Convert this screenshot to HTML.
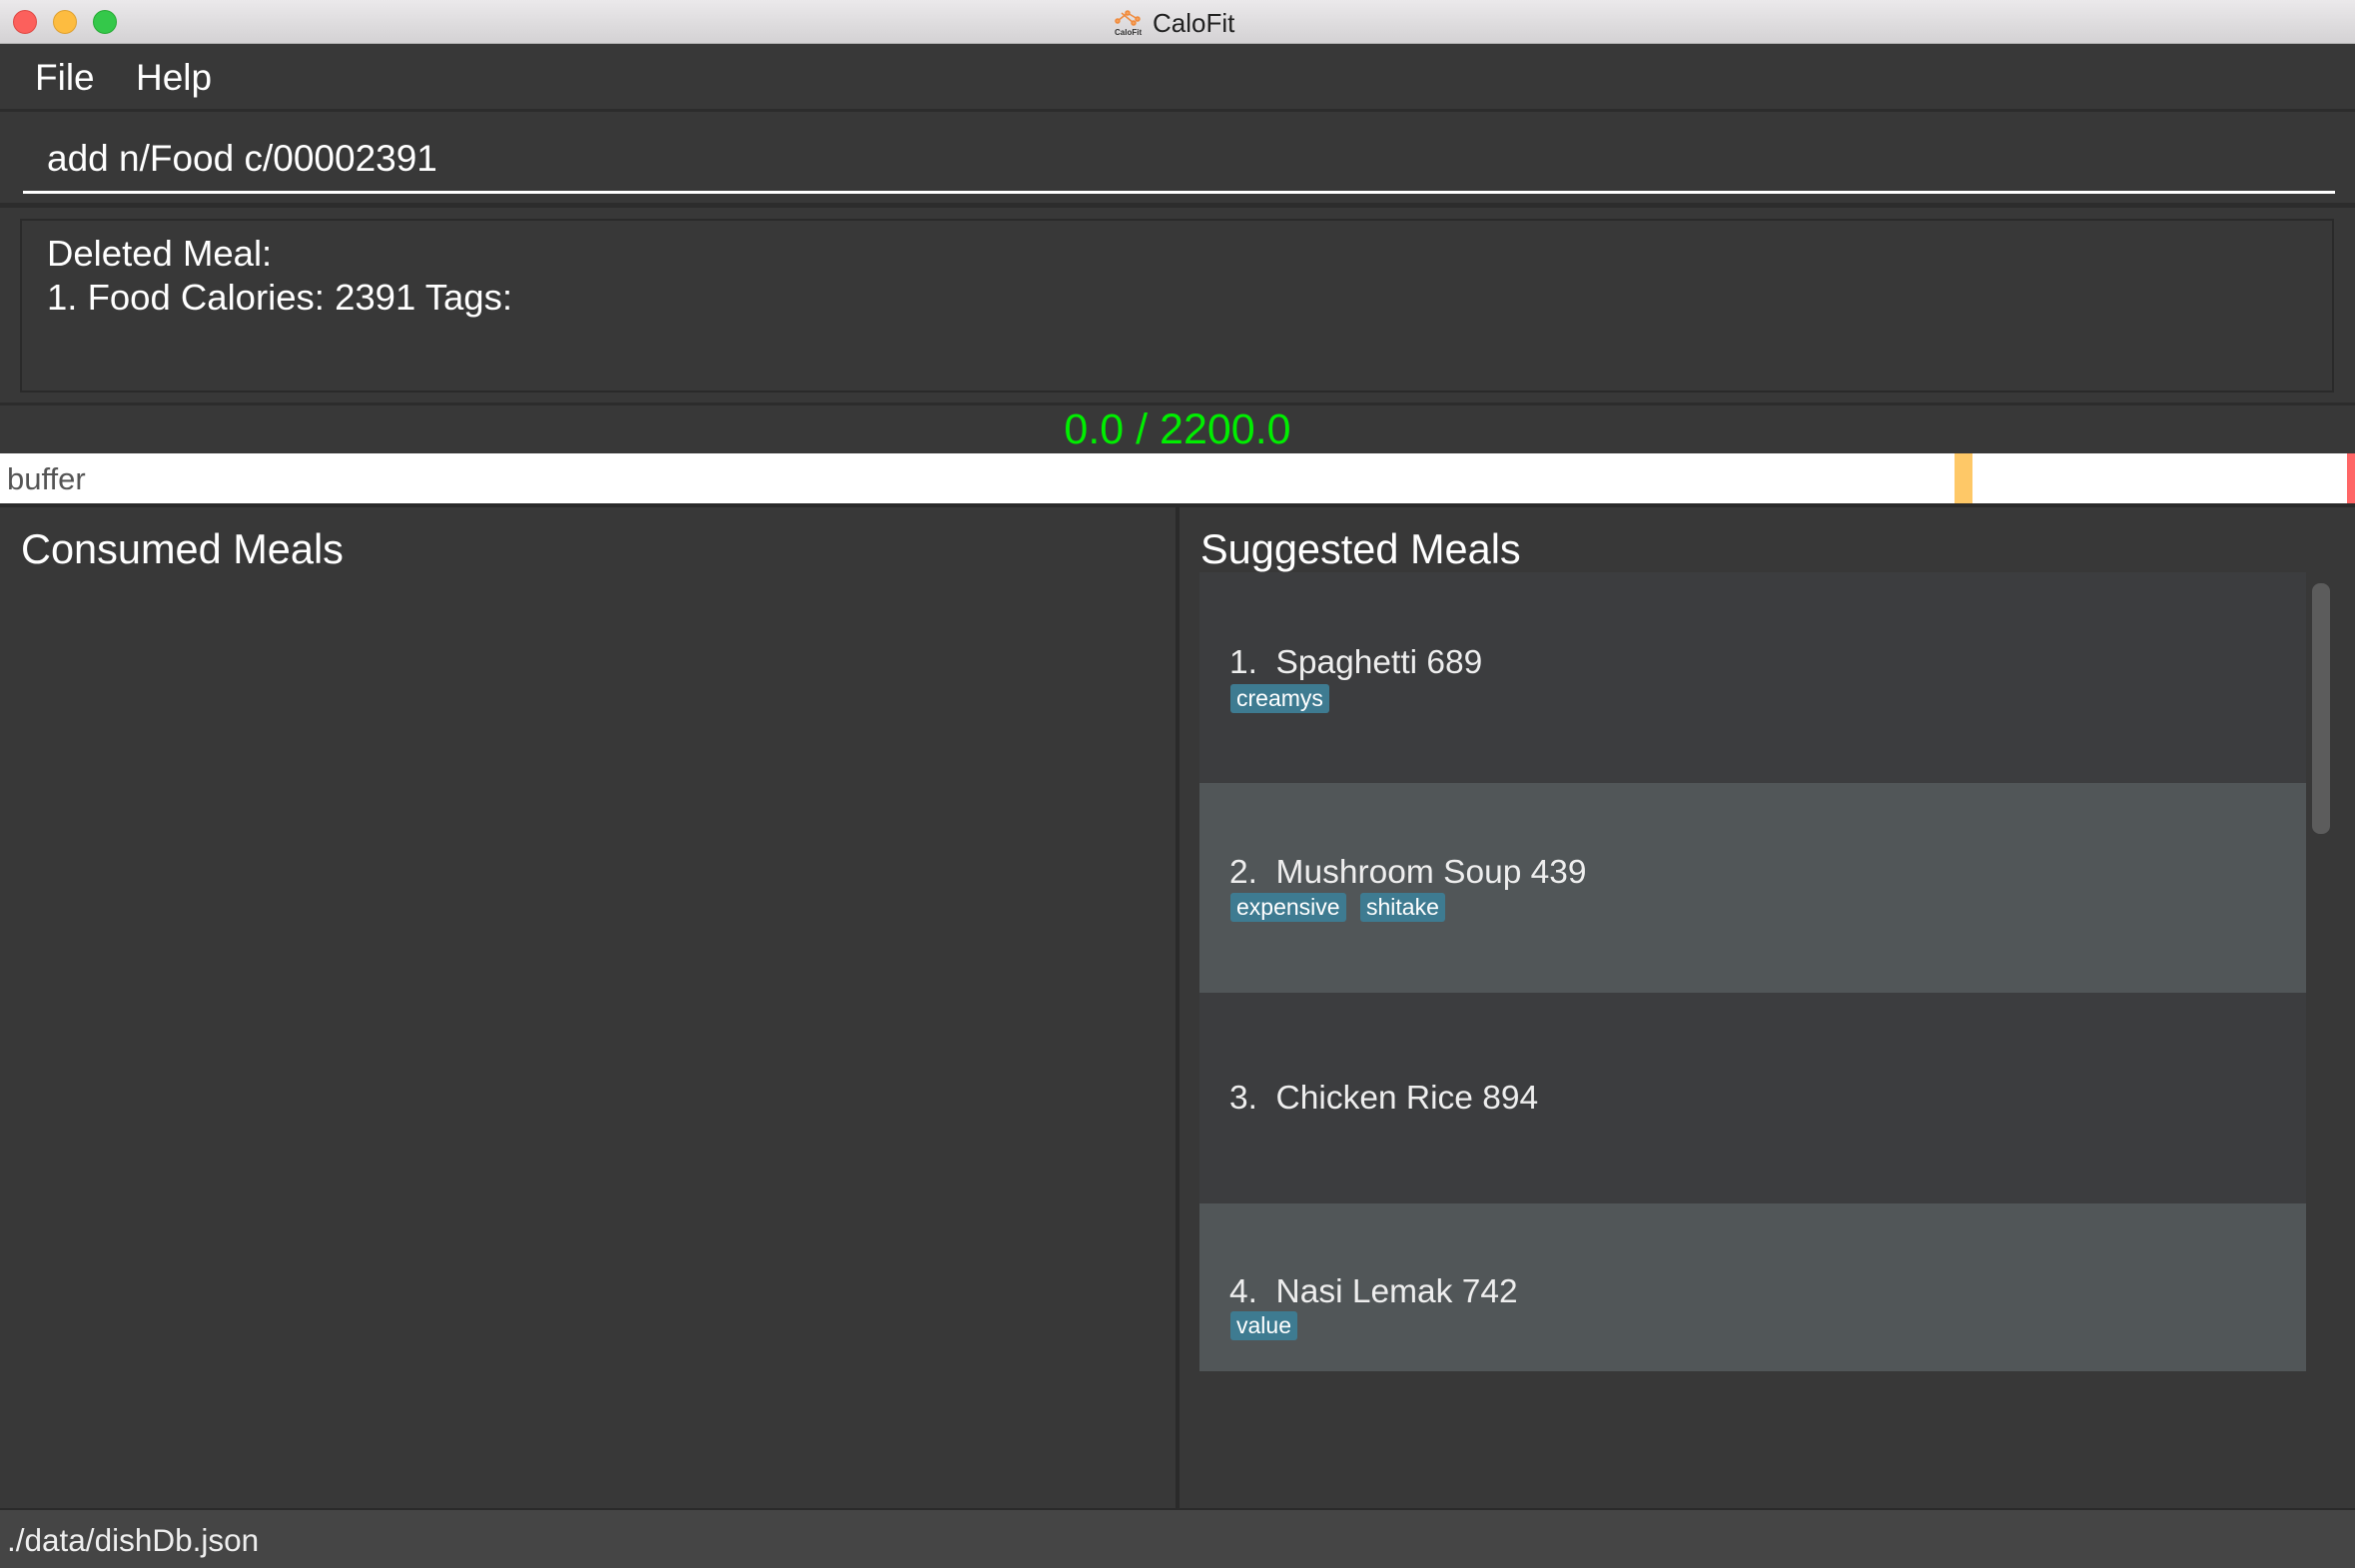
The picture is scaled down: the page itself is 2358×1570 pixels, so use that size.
<!DOCTYPE html>
<html><head><meta charset="utf-8"><style>
*{margin:0;padding:0;box-sizing:border-box}
body{width:2358px;height:1570px;background:#383838;font-family:"Liberation Sans",sans-serif;position:relative;overflow:hidden;color:#fff}
.a{position:absolute}
.t{position:absolute;white-space:nowrap;line-height:1}
.tag{position:absolute;background:#3e7b91;border-radius:3px;color:#fff;font-size:23px;height:29px;line-height:29px;padding:0 6px}
</style></head><body>
<div class="a" style="left:0;top:0;width:2358px;height:44px;background:linear-gradient(#ebe9eb,#d4d2d4);border-bottom:1px solid #b0b0b0"></div>
<div class="a" style="left:13px;top:10px;width:24px;height:24px;border-radius:50%;background:#fc605c;border:1px solid #de4a45"></div>
<div class="a" style="left:53px;top:10px;width:24px;height:24px;border-radius:50%;background:#fdbc40;border:1px solid #dea030"></div>
<div class="a" style="left:93px;top:10px;width:24px;height:24px;border-radius:50%;background:#34c84a;border:1px solid #27aa35"></div>
<svg class="a" style="left:1115px;top:9px" width="32" height="28"><g stroke="#f08a3c" stroke-width="1.5" fill="#f5a05a"><line x1="4" y1="12" x2="14" y2="4"/><line x1="14" y1="4" x2="24" y2="10"/><line x1="8" y1="4" x2="20" y2="14"/><circle cx="4" cy="12" r="2"/><circle cx="14" cy="4" r="2"/><circle cx="24" cy="10" r="2"/><circle cx="20" cy="14" r="2"/></g><text x="1" y="26" font-size="8" font-family="Liberation Sans" font-weight="bold" fill="#333">CaloFit</text></svg>
<div class="t" style="left:1154px;top:10px;font-size:26px;color:#222">CaloFit</div>
<div class="t" style="left:35px;top:59px;font-size:37px">File</div>
<div class="t" style="left:136px;top:59px;font-size:37px">Help</div>
<div class="a" style="left:0;top:109px;width:2358px;height:3px;background:#2c2c2c"></div>
<div class="t" style="left:47px;top:140px;font-size:37px">add n/Food c/00002391</div>
<div class="a" style="left:23px;top:191px;width:2315px;height:3px;background:#fff"></div>
<div class="a" style="left:0;top:203px;width:2358px;height:5px;background:#2c2c2c"></div>
<div class="a" style="left:20px;top:219px;width:2317px;height:174px;border:2px solid #2a2a2a"></div>
<div class="t" style="left:47px;top:236px;font-size:36.5px">Deleted Meal:</div>
<div class="t" style="left:47px;top:280px;font-size:36.5px">1. Food Calories: 2391 Tags:</div>
<div class="a" style="left:0;top:403px;width:2358px;height:3px;background:#2c2c2c"></div>
<div class="t" style="left:0;width:2358px;text-align:center;top:409px;font-size:43px;color:#00ee00">0.0 / 2200.0</div>
<div class="a" style="left:0;top:454px;width:2358px;height:50px;background:#fff"></div>
<div class="t" style="left:7px;top:464px;font-size:31px;color:#555">buffer</div>
<div class="a" style="left:1957px;top:454px;width:18px;height:50px;background:#fec867"></div>
<div class="a" style="left:2350px;top:454px;width:8px;height:50px;background:#f66"></div>
<div class="a" style="left:0;top:504px;width:2358px;height:4px;background:#2a2a2a"></div>
<div class="a" style="left:1177px;top:504px;width:4px;height:1006px;background:#2a2a2a"></div>
<div class="t" style="left:21px;top:529px;font-size:41.5px">Consumed Meals</div>
<div class="t" style="left:1202px;top:529px;font-size:41.5px">Suggested Meals</div>
<div class="a" style="left:1201px;top:573px;width:1108px;height:211px;background:#3c3d3f"></div>
<div class="a" style="left:1201px;top:784px;width:1108px;height:210px;background:#515658"></div>
<div class="a" style="left:1201px;top:994px;width:1108px;height:211px;background:#3c3d3f"></div>
<div class="a" style="left:1201px;top:1205px;width:1108px;height:168px;background:#515658"></div>
<div class="a" style="left:2315px;top:584px;width:18px;height:251px;border-radius:8px;background:#5c5c5c"></div>
<div class="t" style="left:1231px;top:647px;font-size:33.5px;color:#eee">1.&nbsp; Spaghetti 689</div>
<div class="tag" style="left:1232px;top:685px">creamys</div>
<div class="t" style="left:1231px;top:857px;font-size:33.5px;color:#eee">2.&nbsp; Mushroom Soup 439</div>
<div class="tag" style="left:1232px;top:894px">expensive</div>
<div class="tag" style="left:1362px;top:894px">shitake</div>
<div class="t" style="left:1231px;top:1083px;font-size:33.5px;color:#eee">3.&nbsp; Chicken Rice 894</div>
<div class="t" style="left:1231px;top:1277px;font-size:33.5px;color:#eee">4.&nbsp; Nasi Lemak 742</div>
<div class="tag" style="left:1232px;top:1313px">value</div>
<div class="a" style="left:0;top:1510px;width:2358px;height:60px;background:#454545;border-top:2px solid #2a2a2a"></div>
<div class="t" style="left:7px;top:1527px;font-size:31.5px;color:#eee">./data/dishDb.json</div>
</body></html>
